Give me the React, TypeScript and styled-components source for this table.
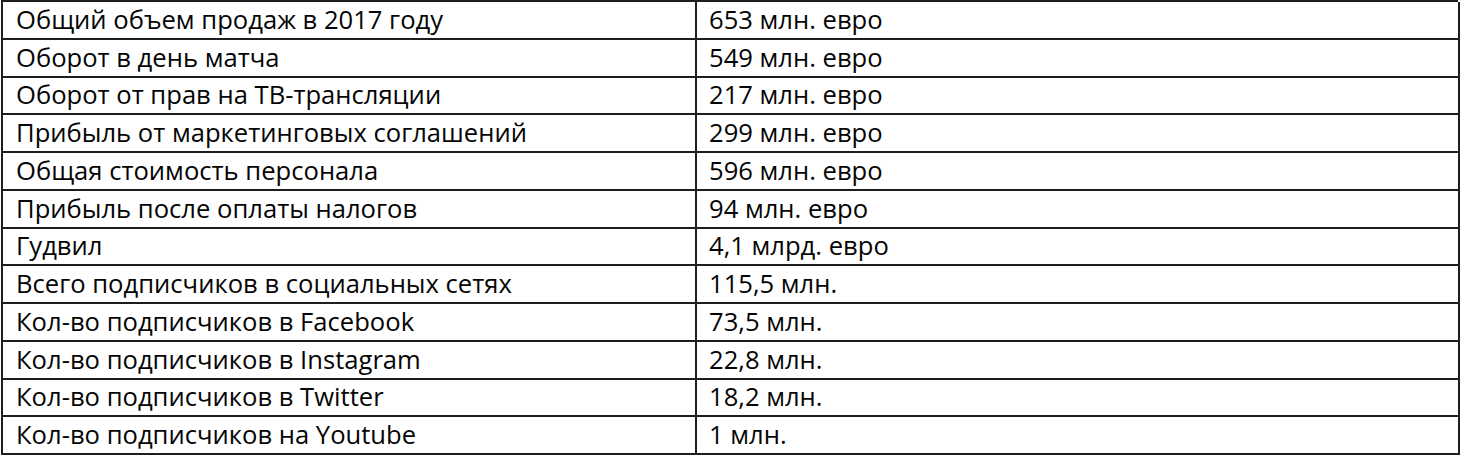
import { Fragment } from "react";
import styled, { createGlobalStyle } from "styled-components";

const rows: [string, string][] = [
  ["Общий объем продаж в 2017 году", "653 млн. евро"],
  ["Оборот в день матча", "549 млн. евро"],
  ["Оборот от прав на ТВ-трансляции", "217 млн. евро"],
  ["Прибыль от маркетинговых соглашений", "299 млн. евро"],
  ["Общая стоимость персонала", "596 млн. евро"],
  ["Прибыль после оплаты налогов", "94 млн. евро"],
  ["Гудвил", "4,1 млрд. евро"],
  ["Всего подписчиков в социальных сетях", "115,5 млн."],
  ["Кол-во подписчиков в Facebook", "73,5 млн."],
  ["Кол-во подписчиков в Instagram", "22,8 млн."],
  ["Кол-во подписчиков в Twitter", "18,2 млн."],
  ["Кол-во подписчиков на Youtube", "1 млн."],
];

const GlobalStyle = createGlobalStyle`
  html, body {
    margin: 0;
    padding: 0;
    background: #fff;
    overflow: hidden;
  }
`;

const Table = styled.div`
  display: grid;
  grid-template-columns: 694px 763px;
  grid-auto-rows: 37.75px;
  margin-left: 1px;
  border-top: 2px solid #1e1e1e;
  border-left: 2px solid #1e1e1e;
  width: 1457px;
  box-sizing: border-box;
  font-family: "Open Sans", Lato, sans-serif;
  font-size: 25.6px;
  font-weight: 500;
  color: #050505;
`;

const Cell = styled.div<{ $value?: boolean }>`
  display: flex;
  align-items: center;
  box-sizing: border-box;
  border-right: 2px solid #1e1e1e;
  border-bottom: 2px solid #1e1e1e;
  padding-left: ${(p) => (p.$value ? "12px" : "13px")};
  padding-bottom: 1px;
  white-space: nowrap;
`;

const App = () => {
  return (
    <>
      <GlobalStyle />
      <Table>
        {rows.map(([label, value]) => (
          <Fragment key={label}>
            <Cell>{label}</Cell>
            <Cell $value>{value}</Cell>
          </Fragment>
        ))}
      </Table>
    </>
  );
};

export default App;
